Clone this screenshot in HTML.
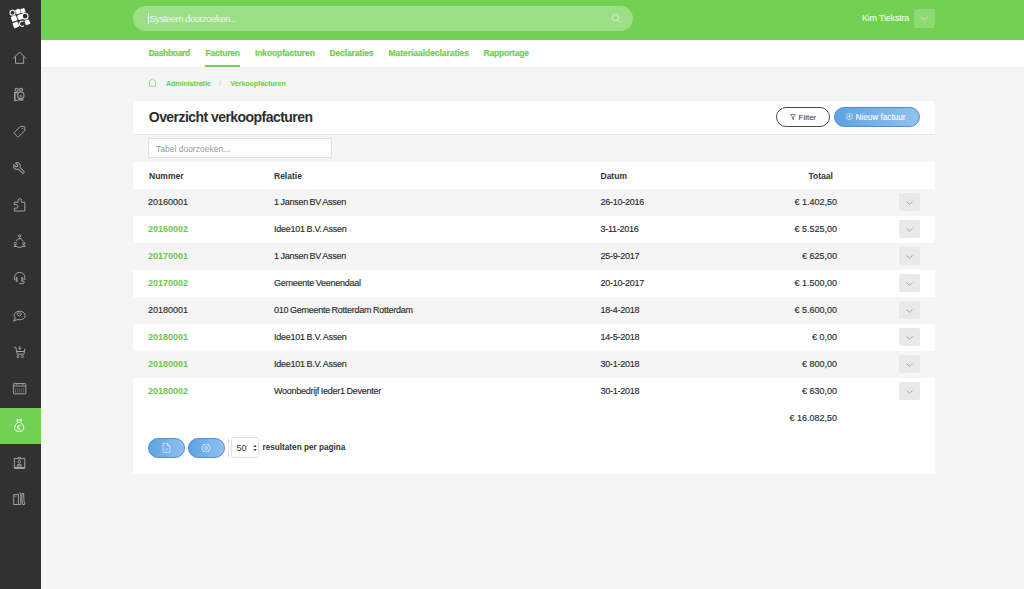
<!DOCTYPE html>
<html><head><meta charset="utf-8">
<style>
*{margin:0;padding:0;box-sizing:border-box}
html,body{width:1024px;height:589px;overflow:hidden;background:#f5f5f5;font-family:"Liberation Sans",sans-serif;color:#333}
.abs{position:absolute}
.t{position:absolute;white-space:nowrap;line-height:1}
#side{position:absolute;left:0;top:0;width:41px;height:589px;background:#313131}
#side .act{position:absolute;left:0;top:407.5px;width:41px;height:36.5px;background:#72d152}
#side svg{position:absolute}
#hdr{position:absolute;left:41px;top:0;width:983px;height:40px;background:#72d152}
#pill{position:absolute;left:133px;top:6px;width:500px;height:25px;border-radius:12.5px;background:rgba(255,255,255,0.3)}
#nav{position:absolute;left:41px;top:40px;width:983px;height:26.5px;background:#fff;box-shadow:0 1px 1.5px rgba(0,0,0,0.025)}
.nav{color:#6fcf4f;font-weight:bold;font-size:8.5px;-webkit-text-stroke:0.2px #6fcf4f}
.bc{color:#6fcf4f;font-weight:bold;font-size:7px;-webkit-text-stroke:0.1px #6fcf4f}
#card{position:absolute;left:133px;top:101px;width:802px;height:373px;background:#fff}
.row{position:absolute;left:133px;width:802px;height:27px}
.g{background:#f5f5f5}
.cell{font-size:9px;color:#2b2b2b;-webkit-text-stroke:0.15px #2b2b2b}
.rel{letter-spacing:-0.25px;word-spacing:-0.6px}
.dt{letter-spacing:-0.25px}
.lnk{color:#6cc84a;font-weight:bold;-webkit-text-stroke:0}
.th{font-size:8.5px;font-weight:bold;color:#333}
.dd{position:absolute;left:899px;width:21px;height:18px;border-radius:2px;background:#e9e9e9}
.dd svg{position:absolute;left:7px;top:7.5px}
</style></head><body>
<div id="side">
  <div class="act"></div>
<svg style="left:8px;top:47px" width="24" height="24" viewBox="0 0 24 24"><path d="M5.1 11.6 L11.6 5.1 L18.1 11.6 M7.5 9.5 V16.3 H15.7 V9.5" fill="none" stroke="#a3a3a3" stroke-width="1" stroke-linejoin="round"/></svg>
<svg style="left:8px;top:83px" width="24" height="24" viewBox="0 0 24 24"><circle cx="8.7" cy="6.7" r="1.5" fill="none" stroke="#a3a3a3" stroke-width="1.1"/><circle cx="13.1" cy="6.7" r="1.5" fill="none" stroke="#a3a3a3" stroke-width="1.1"/><path d="M10.2 6.7 H11.6" stroke="#a3a3a3" stroke-width="0.9"/><path d="M9.6 9.6 H6.6 V17.4 H9.6" fill="none" stroke="#a3a3a3" stroke-width="1.2"/><path d="M7.6 10.5 V16.5" stroke="#a3a3a3" stroke-width="0.8" opacity="0.6"/><circle cx="12.8" cy="12.2" r="3.2" fill="none" stroke="#a3a3a3" stroke-width="1.1"/><path d="M11.4 13.6 L12.8 11.6 L14.2 13.6 Z" fill="#a3a3a3"/><path d="M10.2 15.2 H15.4 V17.6 H10.2 Z" fill="#a3a3a3" opacity="0.85"/></svg>
<svg style="left:8px;top:119px" width="24" height="24" viewBox="0 0 24 24"><path d="M6.2 13.7 L12.3 7.4 H16.3 L16.8 7.9 V11.7 L10.3 17.9 Q10 18.1 9.7 17.9 L6.2 14.3 Z" fill="none" stroke="#a3a3a3" stroke-width="1" stroke-linejoin="round"/><circle cx="14.4" cy="9.6" r="0.7" fill="#a3a3a3"/></svg>
<svg style="left:8px;top:156px" width="24" height="24" viewBox="0 0 24 24"><g transform="matrix(-0.56 0 0 0.56 17.9 5.5)"><path d="M14.7 6.3a1 1 0 0 0 0 1.4l1.6 1.6a1 1 0 0 0 1.4 0l3.77-3.77a6 6 0 0 1-7.94 7.94l-6.91 6.91a2.12 2.12 0 0 1-3-3l6.91-6.91a6 6 0 0 1 7.940-7.94l-3.76 3.76z" fill="none" stroke="#a3a3a3" stroke-width="1.8" stroke-linejoin="round"/></g></svg>
<svg style="left:8px;top:192px" width="24" height="24" viewBox="0 0 24 24"><path d="M6.3 10.2 H10.2 V8.2 A1.6 1.6 0 1 1 13.4 8.2 V10.2 H16.8 V19 H6.3 V16.2 H8.1 A1.8 1.8 0 0 0 8.1 12.6 H6.3 Z" fill="none" stroke="#a3a3a3" stroke-width="1" stroke-linejoin="round"/></svg>
<svg style="left:8px;top:229px" width="24" height="24" viewBox="0 0 24 24"><path d="M8.3 12.2 A4.8 4.8 0 0 1 10.1 9.7 M13.1 9.7 A4.8 4.8 0 0 1 15 12.2 M14.4 17.6 A4.8 4.8 0 0 1 8.8 17.6" fill="none" stroke="#a3a3a3" stroke-width="1"/><circle cx="11.6" cy="6.9" r="1.1" fill="none" stroke="#a3a3a3" stroke-width="1"/><path d="M10 10.3 A1.6 1.6 0 0 1 13.2 10.3 Z" fill="#a3a3a3"/><circle cx="7.3" cy="14.5" r="1.1" fill="none" stroke="#a3a3a3" stroke-width="1"/><path d="M5.5 18 A1.8 1.8 0 0 1 9.1 18 Z" fill="#a3a3a3"/><circle cx="15.9" cy="14.5" r="1.1" fill="none" stroke="#a3a3a3" stroke-width="1"/><path d="M14.1 18 A1.8 1.8 0 0 1 17.7 18 Z" fill="#a3a3a3"/></svg>
<svg style="left:8px;top:266px" width="24" height="24" viewBox="0 0 24 24"><path d="M6.4 14 V11.5 A5.2 5.2 0 0 1 16.8 11.5 V14" fill="none" stroke="#a3a3a3" stroke-width="1"/><rect x="7.6" y="11" width="2.2" height="5" rx="1" fill="#a3a3a3" opacity="0.8"/><rect x="13.2" y="11" width="2.2" height="5" rx="1" fill="#a3a3a3" opacity="0.8"/><path d="M16 15 V16.3 Q16 17.6 14.5 17.6 H11.3" fill="none" stroke="#a3a3a3" stroke-width="1"/></svg>
<svg style="left:8px;top:303px" width="24" height="24" viewBox="0 0 24 24"><path d="M7.3 15.2 A5.6 4.3 0 1 1 9.6 16.5 L5.6 17.9 Z" fill="none" stroke="#a3a3a3" stroke-width="1" stroke-linejoin="round"/><path d="M11.3 13.5 L9.4 11.6 A1.1 1.1 0 0 1 11.3 10.4 A1.1 1.1 0 0 1 13.2 11.6 Z" fill="none" stroke="#a3a3a3" stroke-width="1" stroke-linejoin="round"/></svg>
<svg style="left:8px;top:340px" width="24" height="24" viewBox="0 0 24 24"><path d="M6.2 7.3 H7.8 L9.2 14.2 H16 L16.8 8.6 M8.6 11.5 H16.3" fill="none" stroke="#a3a3a3" stroke-width="1" stroke-linejoin="round"/><circle cx="10" cy="16.6" r="1" fill="none" stroke="#a3a3a3" stroke-width="1"/><circle cx="14.4" cy="16.6" r="1" fill="none" stroke="#a3a3a3" stroke-width="1"/><path d="M11.8 6 V9.3 M10.3 8 L11.8 9.4 L13.3 8" fill="none" stroke="#a3a3a3" stroke-width="1"/></svg>
<svg style="left:8px;top:376px" width="24" height="24" viewBox="0 0 24 24"><rect x="5.4" y="7.6" width="12.4" height="10.2" rx="0.6" fill="none" stroke="#a3a3a3" stroke-width="1"/><path d="M5.4 10 H17.8" stroke="#a3a3a3" stroke-width="1"/><path d="M7.5 12.3 V16.5 M9.6 12.3 V16.5 M11.6 12.3 V16.5 M13.6 12.3 V16.5 M15.6 12.3 V16.5" stroke="#a3a3a3" stroke-width="0.8" opacity="0.55"/><circle cx="8.4" cy="8" r="0.8" fill="#a3a3a3"/><circle cx="14.8" cy="8" r="0.8" fill="#a3a3a3"/></svg>
<svg style="left:8px;top:413px" width="24" height="24" viewBox="0 0 24 24"><path d="M9.9 9.4 Q6.5 11.6 6.6 15 Q6.8 18.4 11.2 18.4 Q15.6 18.4 15.8 15 Q15.9 11.6 12.5 9.4 Z" fill="none" stroke="#fff" stroke-width="1" stroke-linejoin="round"/><path d="M9.7 9.3 L9 6.7 Q10.2 6 11.2 7.3 Q12.2 6 13.4 6.7 L12.7 9.3" fill="none" stroke="#fff" stroke-width="1" stroke-linejoin="round"/><path d="M12.6 12.4 A2.1 2.1 0 1 0 12.6 16.2 M8.9 13.8 H11.4 M8.9 15 H11.4" fill="none" stroke="#fff" stroke-width="0.8"/></svg>
<svg style="left:8px;top:450px" width="24" height="24" viewBox="0 0 24 24"><path d="M9.2 8.4 H6.3 V18.5 H16.8 V8.4 H13.5" fill="none" stroke="#a3a3a3" stroke-width="1" stroke-linejoin="round"/><path d="M9.2 8.8 A2.2 2.2 0 0 1 13.4 8.8 Z" fill="none" stroke="#a3a3a3" stroke-width="1"/><circle cx="11.3" cy="11.8" r="1.3" fill="none" stroke="#a3a3a3" stroke-width="1"/><path d="M9 16 A2.3 1.6 0 0 1 13.6 16 Z" fill="none" stroke="#a3a3a3" stroke-width="1"/><path d="M6.3 17.5 H16.8" stroke="#a3a3a3" stroke-width="1"/></svg>
<svg style="left:8px;top:487px" width="24" height="24" viewBox="0 0 24 24"><path d="M5.7 7.6 H10.4 V17.5 H5.7 Z M7.2 9.2 H8.5" fill="none" stroke="#a3a3a3" stroke-width="1" stroke-linejoin="round"/><path d="M10.6 6.6 L11.7 5.8 L12.8 6.6 V17.5 H10.6" fill="none" stroke="#a3a3a3" stroke-width="1" stroke-linejoin="round"/><path d="M13.9 6.5 H15.6 L16 14 L16.6 17.5 H14.5 L13.9 14 Z" fill="none" stroke="#a3a3a3" stroke-width="1" stroke-linejoin="round"/></svg>
<svg style="left:6px;top:4px" width="28" height="28" viewBox="0 0 28 28"><g fill="#fff"><circle cx="6.5" cy="8.7" r="2.5" fill="none" stroke="#fff" stroke-width="1.1"/><rect x="9.70" y="5.20" width="4.6" height="4.6" rx="0.8" transform="rotate(-20 12 7.5)"/><rect x="14.70" y="4.50" width="4.4" height="4.4" rx="0.8" transform="rotate(-20 16.9 6.7)"/><rect x="5.35" y="11.85" width="5.5" height="5.5" rx="0.8" transform="rotate(-20 8.1 14.6)"/><rect x="11.50" y="10.30" width="5.4" height="5.4" rx="1.8" transform="rotate(-20 14.2 13)"/><circle cx="19.1" cy="12.2" r="2.9" fill="none" stroke="#fff" stroke-width="1.1"/><rect x="7.15" y="18.15" width="5.5" height="5.5" rx="0.8" transform="rotate(-20 9.9 20.9)"/><path d="M17.6 17.6 A2.6 2.6 0 1 0 17.9 21.6" fill="none" stroke="#fff" stroke-width="1.1"/><rect x="19.00" y="15.90" width="4.8" height="4.8" rx="0.8" transform="rotate(-20 21.4 18.3)"/></g></svg>
</div>
<div id="hdr"></div>
<div id="pill"></div>
<div class="t" style="left:148px;top:13px;width:1px;height:10.5px;background:#fff"></div>
<div class="t" style="left:149.5px;top:13.5px;font-size:9.5px;color:rgba(255,255,255,0.85);letter-spacing:-0.5px">Systeem doorzoeken...</div>
<svg class="abs" style="left:611px;top:13px" width="11" height="11" viewBox="0 0 11 11"><circle cx="4.5" cy="4.5" r="3.3" fill="none" stroke="rgba(255,255,255,0.55)" stroke-width="0.9"/><path d="M7 7 L9.5 9.5" stroke="rgba(255,255,255,0.55)" stroke-width="0.9"/></svg>
<div class="t" style="left:862px;top:14px;font-size:9px;color:#fff;letter-spacing:-0.2px">Kim Tiekstra</div>
<div class="abs" style="left:914px;top:9px;width:21px;height:18.5px;border-radius:2px;background:rgba(255,255,255,0.2)"></div>
<svg class="abs" style="left:920px;top:16px" width="9" height="5" viewBox="0 0 9 5"><path d="M0.8 0.8 L4.3 4 L7.8 0.8" fill="none" stroke="rgba(255,255,255,0.7)" stroke-width="0.8"/></svg>

<div id="nav"></div>
<div class="t nav" style="left:148.5px;top:49px;letter-spacing:-0.33px">Dashboard</div>
<div class="t nav" style="left:205.5px;top:49px;letter-spacing:-0.19px">Facturen</div>
<div class="abs" style="left:205px;top:65px;width:35px;height:2px;background:#72d152"></div>
<div class="t nav" style="left:255px;top:49px;letter-spacing:-0.12px">Inkoopfacturen</div>
<div class="t nav" style="left:329.5px;top:49px;letter-spacing:-0.14px">Declaraties</div>
<div class="t nav" style="left:388.5px;top:49px;letter-spacing:-0.04px">Materiaaldeclaraties</div>
<div class="t nav" style="left:483.5px;top:49px;letter-spacing:-0.2px">Rapportage</div>

<svg class="abs" style="left:148px;top:78px" width="9" height="9" viewBox="0 0 9 9"><path d="M0.6 4.3 L4.5 0.6 L8.4 4.3 M1.6 3.5 V8.4 H7.4 V3.5" fill="none" stroke="#8ad874" stroke-width="0.8"/></svg>
<div class="t bc" style="left:166px;top:80px">Administratie</div>
<div class="t" style="left:219px;top:80px;font-size:7px;color:#bbb">/</div>
<div class="t bc" style="left:230.5px;top:80px">Verkoopfacturen</div>

<div id="card"></div>
<div class="t" style="left:148.8px;top:110.3px;font-size:14px;font-weight:bold;color:#2e2e2e;letter-spacing:-0.55px">Overzicht verkoopfacturen</div>
<div class="abs" style="left:776px;top:107px;width:54px;height:20px;border-radius:10px;border:1.3px solid #4a4a4a;background:#fff"></div>
<svg class="abs" style="left:790px;top:114px" width="6" height="6" viewBox="0 0 6 6"><path d="M0.4 0.5 H5.6 L3.5 3 V5.5 L2.5 5 V3 Z" fill="none" stroke="#555" stroke-width="0.7"/></svg>
<div class="t" style="left:798.5px;top:113.5px;font-size:8px;color:#333">Filter</div>
<div class="abs" style="left:834px;top:107px;width:86px;height:20px;border-radius:10px;border:1px solid #4f8fd2;background:linear-gradient(90deg,#5ea3e2,#8fc2ef)"></div>
<svg class="abs" style="left:846px;top:113px" width="7" height="7" viewBox="0 0 7 7"><circle cx="3.5" cy="3.5" r="3" fill="none" stroke="rgba(255,255,255,0.85)" stroke-width="0.7"/><path d="M1.8 3.5 H5.2 M3.5 1.8 V5.2" stroke="rgba(255,255,255,0.85)" stroke-width="0.7"/></svg>
<div class="t" style="left:855.5px;top:113.5px;font-size:8.2px;color:#fff;-webkit-text-stroke:0.1px #fff">Nieuw factuur</div>

<div class="abs" style="left:133px;top:134px;width:802px;height:1px;background:#e9e9e9"></div>
<div class="row g" style="top:135px;height:26.5px"></div>
<div class="abs" style="left:148px;top:138px;width:184px;height:20px;border:1px solid #dedede;border-radius:2px;background:#fff"></div>
<div class="t" style="left:156px;top:144.5px;font-size:8.5px;color:#999">Tabel doorzoeken...</div>

<div class="t th" style="left:149px;top:172px">Nummer</div>
<div class="t th" style="left:274px;top:172px">Relatie</div>
<div class="t th" style="left:600.5px;top:172px">Datum</div>
<div class="t th" style="left:808.5px;top:172px">Totaal</div>

<!--ROWS-->
<div class="row g" style="top:188.5px"></div>
<div class="t cell" style="left:148px;top:198.1px">20160001</div>
<div class="t cell rel" style="left:274px;top:198.1px">1 Jansen BV Assen</div>
<div class="t cell dt" style="left:600.5px;top:198.1px">26-10-2016</div>
<div class="t cell" style="right:187px;top:198.1px">€ 1.402,50</div>
<div class="dd" style="top:193.1px"><svg width="7" height="4" viewBox="0 0 7 4"><path d="M0.5 0.5 L3.5 3.3 L6.5 0.5" fill="none" stroke="#888" stroke-width="0.7"/></svg></div>
<div class="row" style="top:215.5px"></div>
<div class="t cell lnk" style="left:148px;top:225.1px">20160002</div>
<div class="t cell rel" style="left:274px;top:225.1px">Idee101 B.V. Assen</div>
<div class="t cell dt" style="left:600.5px;top:225.1px">3-11-2016</div>
<div class="t cell" style="right:187px;top:225.1px">€ 5.525,00</div>
<div class="dd" style="top:220.1px"><svg width="7" height="4" viewBox="0 0 7 4"><path d="M0.5 0.5 L3.5 3.3 L6.5 0.5" fill="none" stroke="#888" stroke-width="0.7"/></svg></div>
<div class="row g" style="top:242.5px"></div>
<div class="t cell lnk" style="left:148px;top:252.1px">20170001</div>
<div class="t cell rel" style="left:274px;top:252.1px">1 Jansen BV Assen</div>
<div class="t cell dt" style="left:600.5px;top:252.1px">25-9-2017</div>
<div class="t cell" style="right:187px;top:252.1px">€ 625,00</div>
<div class="dd" style="top:247.1px"><svg width="7" height="4" viewBox="0 0 7 4"><path d="M0.5 0.5 L3.5 3.3 L6.5 0.5" fill="none" stroke="#888" stroke-width="0.7"/></svg></div>
<div class="row" style="top:269.5px"></div>
<div class="t cell lnk" style="left:148px;top:279.1px">20170002</div>
<div class="t cell rel" style="left:274px;top:279.1px">Gemeente Veenendaal</div>
<div class="t cell dt" style="left:600.5px;top:279.1px">20-10-2017</div>
<div class="t cell" style="right:187px;top:279.1px">€ 1.500,00</div>
<div class="dd" style="top:274.1px"><svg width="7" height="4" viewBox="0 0 7 4"><path d="M0.5 0.5 L3.5 3.3 L6.5 0.5" fill="none" stroke="#888" stroke-width="0.7"/></svg></div>
<div class="row g" style="top:296.5px"></div>
<div class="t cell" style="left:148px;top:306.1px">20180001</div>
<div class="t cell rel" style="left:274px;top:306.1px">010 Gemeente Rotterdam Rotterdam</div>
<div class="t cell dt" style="left:600.5px;top:306.1px">18-4-2018</div>
<div class="t cell" style="right:187px;top:306.1px">€ 5.600,00</div>
<div class="dd" style="top:301.1px"><svg width="7" height="4" viewBox="0 0 7 4"><path d="M0.5 0.5 L3.5 3.3 L6.5 0.5" fill="none" stroke="#888" stroke-width="0.7"/></svg></div>
<div class="row" style="top:323.5px"></div>
<div class="t cell lnk" style="left:148px;top:333.1px">20180001</div>
<div class="t cell rel" style="left:274px;top:333.1px">Idee101 B.V. Assen</div>
<div class="t cell dt" style="left:600.5px;top:333.1px">14-5-2018</div>
<div class="t cell" style="right:187px;top:333.1px">€ 0,00</div>
<div class="dd" style="top:328.1px"><svg width="7" height="4" viewBox="0 0 7 4"><path d="M0.5 0.5 L3.5 3.3 L6.5 0.5" fill="none" stroke="#888" stroke-width="0.7"/></svg></div>
<div class="row g" style="top:350.5px"></div>
<div class="t cell lnk" style="left:148px;top:360.1px">20180001</div>
<div class="t cell rel" style="left:274px;top:360.1px">Idee101 B.V. Assen</div>
<div class="t cell dt" style="left:600.5px;top:360.1px">30-1-2018</div>
<div class="t cell" style="right:187px;top:360.1px">€ 800,00</div>
<div class="dd" style="top:355.1px"><svg width="7" height="4" viewBox="0 0 7 4"><path d="M0.5 0.5 L3.5 3.3 L6.5 0.5" fill="none" stroke="#888" stroke-width="0.7"/></svg></div>
<div class="row" style="top:377.5px"></div>
<div class="t cell lnk" style="left:148px;top:387.1px">20180002</div>
<div class="t cell rel" style="left:274px;top:387.1px">Woonbedrijf Ieder1 Deventer</div>
<div class="t cell dt" style="left:600.5px;top:387.1px">30-1-2018</div>
<div class="t cell" style="right:187px;top:387.1px">€ 630,00</div>
<div class="dd" style="top:382.1px"><svg width="7" height="4" viewBox="0 0 7 4"><path d="M0.5 0.5 L3.5 3.3 L6.5 0.5" fill="none" stroke="#888" stroke-width="0.7"/></svg></div>
<div class="t cell" style="right:187px;top:414.1px">€ 16.082,50</div>
<!--/ROWS-->
<div class="abs" style="left:148px;top:438px;width:37px;height:20px;border-radius:10px;border:1px solid #4f8fd2;background:linear-gradient(90deg,#5ea3e2,#8fc2ef)"></div>
<svg class="abs" style="left:162px;top:443px" width="9" height="10" viewBox="0 0 9 10"><path d="M1 0.6 H5.5 L8 3 V9.4 H1 Z M5.5 0.6 V3 H8" fill="none" stroke="rgba(255,255,255,0.8)" stroke-width="0.7"/><path d="M3 6.5 L4 7.5 L6 5.2" fill="none" stroke="rgba(255,255,255,0.8)" stroke-width="0.7"/></svg>
<div class="abs" style="left:188px;top:438px;width:37px;height:20px;border-radius:10px;border:1px solid #4f8fd2;background:linear-gradient(90deg,#5ea3e2,#8fc2ef)"></div>
<svg class="abs" style="left:201px;top:443px" width="10" height="10" viewBox="0 0 10 10"><circle cx="5" cy="5" r="1.5" fill="none" stroke="rgba(255,255,255,0.85)" stroke-width="0.7"/><path d="M5 0.7 L6 1.9 L7.6 1.5 L7.9 3 L9.3 3.8 L8.6 5 L9.3 6.2 L7.9 7 L7.6 8.5 L6 8.1 L5 9.3 L4 8.1 L2.4 8.5 L2.1 7 L0.7 6.2 L1.4 5 L0.7 3.8 L2.1 3 L2.4 1.5 L4 1.9 Z" fill="none" stroke="rgba(255,255,255,0.85)" stroke-width="0.7"/></svg>
<div class="abs" style="left:228px;top:438px;width:1px;height:20px;background:#e3e3e3"></div>
<div class="abs" style="left:231px;top:437px;width:28px;height:21px;border:1px solid #e0e0e0;border-radius:3px;background:#fff"></div>
<div class="t" style="left:236.5px;top:443.5px;font-size:9px;color:#333">50</div>
<svg class="abs" style="left:253px;top:444px" width="4" height="8" viewBox="0 0 4 8"><path d="M0.3 3 L2 0.8 L3.7 3 Z M0.3 5 L2 7.2 L3.7 5 Z" fill="#444"/></svg>
<div class="t" style="left:262.5px;top:444px;font-size:8.2px;font-weight:bold;color:#333">resultaten per pagina</div>

</body></html>
